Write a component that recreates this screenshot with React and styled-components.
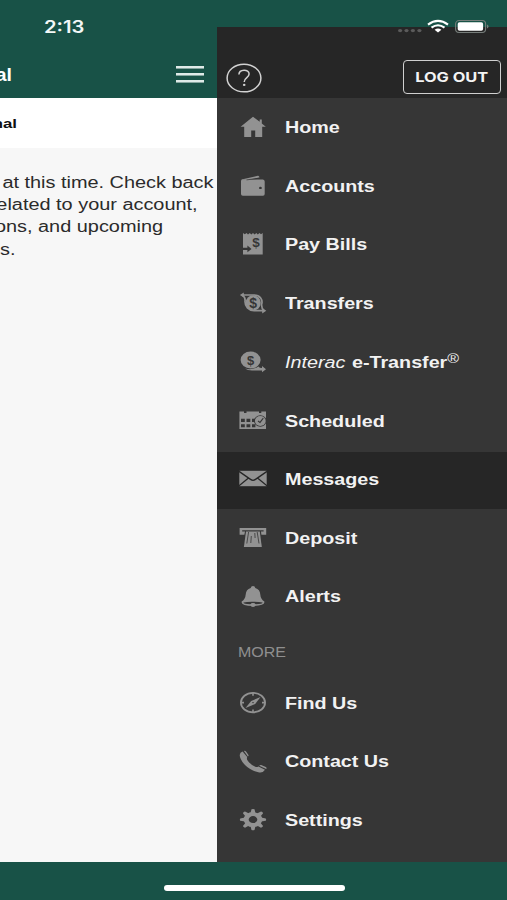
import styled, { createGlobalStyle } from "styled-components";

const green = "#185247";
const dark = "#262626";
const panel = "#363636";
const iconGray = "#929292";

const menu = [
  { label: "Home", icon: HomeIcon },
  { label: "Accounts", icon: WalletIcon },
  { label: "Pay Bills", icon: BillIcon },
  { label: "Transfers", icon: TransferIcon },
  { label: "e-Transfer", icon: InteracIcon, interac: true },
  { label: "Scheduled", icon: CalendarIcon },
  { label: "Messages", icon: MailIcon, active: true },
  { label: "Deposit", icon: DepositIcon },
  { label: "Alerts", icon: BellIcon },
];

const more = [
  { label: "Find Us", icon: CompassIcon },
  { label: "Contact Us", icon: PhoneIcon },
  { label: "Settings", icon: GearIcon },
];

function App() {
  return (
    <>
      <GlobalStyle />
      <Screen>
        <Content>
          <Page>
            <PageHeader>
              <Title>al</Title>
              <MenuButton aria-label="Menu">
                <span />
                <span />
                <span />
              </MenuButton>
            </PageHeader>
            <SubHeader>
              <Tail $width={17}>nal</Tail>
            </SubHeader>
            <Message>
              <Tail $width={213.5}>at this time. Check back</Tail>
              <Tail $width={197.6}>elated to your account,</Tail>
              <Tail $width={163}>ons, and upcoming</Tail>
              <Tail $width={15.6}>s.</Tail>
            </Message>
          </Page>
          <Drawer>
            <DrawerHeader>
              <HelpIcon />
              <LogOut>
                <Wide $scale={1.23} $center>LOG OUT</Wide>
              </LogOut>
            </DrawerHeader>
            <nav>
              {menu.map((item) => (
                <MenuItem key={item.label} item={item} />
              ))}
              <Section>
                <Wide $scale={1.16}>MORE</Wide>
              </Section>
              {more.map((item) => (
                <MenuItem key={item.label} item={item} />
              ))}
            </nav>
          </Drawer>
        </Content>
        <BottomBar>
          <HomeIndicator />
        </BottomBar>
        <StatusBar>
          <Time>
            <Wide $scale={1.19}>2:13</Wide>
          </Time>
          <StatusIcons />
        </StatusBar>
      </Screen>
    </>
  );
}

export default App;

function MenuItem({ item }) {
  const Icon = item.icon;
  return (
    <Row $active={item.active} $tall={item.interac}>
      <IconBox viewBox="0 0 28 24">
        <Icon />
      </IconBox>
      <Label $scale={1.232}>
        {item.interac && <em>Interac </em>}
        {item.label}
        {item.interac && <sup>®</sup>}
      </Label>
    </Row>
  );
}

function HomeIcon() {
  return <path d="M14 1.7 L20.7 6.8 V4.4 H22.8 V8.5 L26.8 11.8 H23.2 V22 H16.2 V15.5 H12.2 V22 H5.2 V11.8 H1.6 Z" />;
}

function WalletIcon() {
  return (
    <>
      <path d="M2.6 5.4 L18.8 1.8 Q20.2 1.5 20.5 3.4 L8 6 Z" />
      <path d="M3.5 5.2 L8 5.6 H24 Q25.7 6 25.7 7.6 V20 Q25.7 21.8 24 21.8 H3.8 Q2 21.8 2 20 V7 Q2 5.3 3.5 5.2 Z" />
      <path d="M7.5 5.9 L20.5 4.2" stroke={panel} strokeWidth=".7" />
      <ellipse cx="21.4" cy="13.9" rx="1.4" ry="1.2" fill={panel} />
    </>
  );
}

function BillIcon() {
  return (
    <>
      <path d="M4 1 L5.8 2.2 L7.6 1 L9 2.6 L10.8 1 L12.3 2.6 L14 1 L15.6 2.6 L17.3 1 L18.8 2.6 L20.5 1 L22 2.2 L23.7 1 V22.5 H4 Z" />
      <Dollar x="17" y="15.4" $size={13.5}>$</Dollar>
      <path d="M3.5 15.8 H8.4 V13.5 L12.5 16.9 L8.4 20.3 V18 H3.5 Z" fill={panel} />
    </>
  );
}

function TransferIcon() {
  return (
    <>
      <ellipse cx="14.2" cy="11.8" rx="7.6" ry="7.6" />
      <path d="M3.5 4 H14 C21.5 3.6 24 9 22.6 13.5 Q22.4 17.5 25 19.6" fill="none" stroke={iconGray} strokeWidth="1.7" />
      <path d="M3.6 4.6 Q6.6 6.3 6 10.5 C6 15.5 9.5 19.6 15 19.7 H24.5" fill="none" stroke={iconGray} strokeWidth="1.7" />
      <path d="M.9 4 L4.8 1.4 V6.6 Z M27.3 19.7 L23.2 17 V22.5 Z" />
      <Dollar x="14.2" y="16.7" $size={14}>$</Dollar>
    </>
  );
}

function InteracIcon() {
  return (
    <>
      <ellipse cx="11.6" cy="10.1" rx="10" ry="8.5" />
      <path d="M6 18.6 Q14 20.4 19.4 16.4 Q20.5 18 23 18 V16 L27 19.2 L23 22.2 V20.6 H13 Q8.5 20.6 6 18.6 Z" />
      <Dollar x="11.7" y="14.6" $size={13}>$</Dollar>
    </>
  );
}

function CalendarIcon() {
  return (
    <>
      <path d="M.4 2.4 H5 V4 H7.5 V2.4 H20 V4 H22.3 V2.4 H27 V20.1 H.4 Z" />
      <path
        d="M2 9.8 H5.8 V12.9 H2 Z M7.5 9.8 H11.3 V12.9 H7.5 Z M13 9.8 H16.4 V12.9 H13 Z M2 15.2 H5.8 V18.3 H2 Z M7.5 15.2 H11.3 V18.3 H7.5 Z M13 15.2 H16.4 V18.3 H13 Z"
        fill={panel}
      />
      <ellipse cx="21.3" cy="12" rx="6.3" ry="5.8" fill={panel} />
      <ellipse cx="21.3" cy="12" rx="5.4" ry="4.9" />
      <path d="M19 12 L21 13.4 L24.3 9.2" fill="none" stroke={panel} strokeWidth="1.1" />
    </>
  );
}

function MailIcon() {
  return (
    <>
      <path d="M.3 3.8 H27.7 V19.2 H.3 Z" />
      <path d="M0 4.4 L11.5 12.4 Q14 14.2 16.5 12.4 L28 4.4 M0 18.8 L9.5 11 M28 18.8 L18.5 11" fill="none" stroke={dark} strokeWidth="1.3" />
    </>
  );
}

function DepositIcon() {
  return (
    <>
      <path d="M.6 1.9 H27.2 V8.8 H22.4 L22 5.6 H24.6 V4.2 H3.2 V5.6 H6 L5.4 8.8 H.6 Z" />
      <path d="M7 5.4 H20.8 L22.8 20.9 H4.9 Z" />
      <path d="M9.6 6 L7.8 17.5 M18.2 6 L20 17.5 M12.3 10 L11.8 17 M15.8 7 L16.1 12" fill="none" stroke={panel} strokeWidth=".8" />
    </>
  );
}

function BellIcon() {
  return (
    <>
      <path d="M14 1 Q16 1 16.3 3 Q21 4.3 21.3 9.5 Q21.6 14 25.3 16.6 Q26.5 20.8 14 21 Q1.5 20.8 2.7 16.6 Q6.4 14 6.7 9.5 Q7 4.3 11.7 3 Q12 1 14 1 Z" />
      <path d="M4.4 17.6 Q8 16.7 14 16.8 Q20 16.7 23.6 17.6 Q23.6 19 16.8 19.3 Q14 17.2 11.2 19.3 Q4.4 19 4.4 17.6 Z" fill={panel} />
      <ellipse cx="14" cy="20" rx="2.4" ry="1.9" />
    </>
  );
}

function CompassIcon() {
  return (
    <>
      <ellipse cx="14" cy="11.6" rx="12.1" ry="9.7" fill="none" stroke={iconGray} strokeWidth="1.8" />
      <path d="M14 2 V4.8 M14 18.4 V21 M2 11.6 H5 M23 11.6 H26" stroke={iconGray} strokeWidth="1.6" />
      <path d="M21.5 5.9 L16.2 13.1 L6.5 17.1 L12.2 10 Z" />
      <ellipse cx="14" cy="11.6" rx=".8" ry=".7" fill={panel} />
    </>
  );
}

function PhoneIcon() {
  return (
    <>
      <path d="M3.6 1.6 L8.2 7.1 Q7.4 8.8 8.8 10.8 Q11.6 14.7 16.3 16.8 Q18 17.4 19.4 16.5 L26 19.8 Q24 23 20.3 22.4 Q12 21.1 6 15 Q.8 9.4 .7 5 Q.9 2.4 3.6 1.6 Z" />
      <path d="M4.9 1 Q6.1 .3 7 1.4 L9.5 5 Q9.8 6 8.9 6.4 Z M20.2 15.8 Q21 14.8 22.2 15.1 L26.8 17 Q28.1 17.8 27.2 19.1 Z" />
    </>
  );
}

function GearIcon() {
  return (
    <g transform="translate(14 11.6) scale(1.24 1)">
      {[0, 45, 90, 135, 180, 225, 270, 315].map((angle) => (
        <path key={angle} d="M-2 -6.5 L-1.2 -10.3 Q0 -11 1.2 -10.3 L2 -6.5 Z" transform={`rotate(${angle})`} />
      ))}
      <circle r="5.5" fill="none" stroke={iconGray} strokeWidth="4" />
    </g>
  );
}

function HelpIcon() {
  return (
    <HelpSvg viewBox="0 0 36 30">
      <ellipse cx="18" cy="15" rx="16.9" ry="13.8" fill="none" stroke="#d2d2d2" strokeWidth="1.5" />
      <path d="M12.9 11.6 C13 5.7 23.2 5.8 23.1 11 C23 14.8 18.2 14.4 18.2 19" fill="none" stroke="#d2d2d2" strokeWidth="1.5" />
      <ellipse cx="18.2" cy="21.9" rx="1.3" ry="1.1" fill="#d2d2d2" />
    </HelpSvg>
  );
}

function StatusIcons() {
  return (
    <StatusSvg viewBox="0 0 92 16">
      <g fill="#5b5b5b">
        <ellipse cx="3.1" cy="12.6" rx="2.1" ry="1.7" />
        <ellipse cx="9.5" cy="12.6" rx="2.1" ry="1.7" />
        <ellipse cx="15.9" cy="12.6" rx="2.1" ry="1.7" />
        <ellipse cx="22.4" cy="12.6" rx="2.1" ry="1.7" />
      </g>
      <g fill="none" stroke="#fff" strokeWidth="2.2">
        <path d="M31 6.6 Q41 -.8 51 6.6" />
        <path d="M34.5 9.6 Q41 4.9 47.5 9.6" />
      </g>
      <path d="M37.6 11.7 Q41 9.4 44.4 11.7 L41 14.6 Z" fill="#fff" />
      <rect x="58.6" y="2.5" width="30" height="12" rx="3.5" fill="none" stroke="#777e7b" strokeWidth="1.1" />
      <rect x="60.7" y="4.2" width="25.4" height="8.6" rx="1.8" fill="#fff" />
      <path d="M90 6.4 Q91.5 7 91.5 8.5 Q91.5 10 90 10.6 Z" fill="#777e7b" />
    </StatusSvg>
  );
}

const GlobalStyle = createGlobalStyle`
  body {
    margin: 0;
    font-family: "Liberation Sans", Arial, sans-serif;
  }

  * {
    box-sizing: border-box;
  }
`;

const Screen = styled.div`
  position: relative;
  width: 507px;
  height: 900px;
  display: flex;
  flex-direction: column;
  overflow: hidden;
  background: ${green};
`;

const Content = styled.div`
  height: 862px;
  display: grid;
  grid-template-columns: 217px 290px;
`;

const Page = styled.main`
  display: flex;
  flex-direction: column;
  overflow: hidden;
  background: #f7f7f7;
  color: #2b2b2b;
`;

const PageHeader = styled.header`
  height: 98px;
  display: flex;
  justify-content: space-between;
  padding: 62px 13px 0 0;
  background: ${green};
`;

const Title = styled.h1`
  width: 12px;
  margin: 0;
  display: flex;
  justify-content: flex-end;
  color: #fff;
  font-size: 18.5px;
  line-height: 25px;
  transform: scaleX(1.05);
  transform-origin: right;
`;

const MenuButton = styled.button`
  width: 28px;
  height: 24px;
  padding: 4px 0 0;
  border: 0;
  background: none;
  display: flex;
  flex-direction: column;
  gap: 4px;

  span {
    height: 3px;
    width: 28px;
    flex: none;
    background: linear-gradient(#dfeae8 2px, #86a59f 2px);
  }
`;

const SubHeader = styled.div`
  height: 50px;
  padding-top: 15px;
  background: #fff;
  color: #111;
  font-size: 13.5px;
  font-weight: bold;
`;

const Message = styled.div`
  padding-top: 24px;
  font-size: 16px;
`;

const Tail = styled.div`
  width: ${({ $width }) => $width}px;
  display: flex;
  justify-content: flex-end;
  white-space: nowrap;
  line-height: 22.2px;
  transform: scaleX(1.243);
  transform-origin: right;
`;

const Drawer = styled.aside`
  margin-top: 27px;
  background: ${panel};
  color: #f2f2f2;
`;

const DrawerHeader = styled.div`
  height: 71px;
  display: flex;
  align-items: flex-start;
  justify-content: space-between;
  padding: 33px 6px 0 9px;
  background: ${dark};
`;

const HelpSvg = styled.svg`
  width: 36px;
  height: 30px;
  margin-top: 3px;
`;

const LogOut = styled.button`
  width: 98.5px;
  height: 33.5px;
  padding: 0;
  border: 1.5px solid #d0d0d0;
  border-radius: 4px;
  background: none;
  color: #f4f4f4;
  font-family: Inter, sans-serif;
  font-size: 13.3px;
  font-weight: 700;
`;

const Wide = styled.span`
  display: inline-block;
  white-space: pre;
  transform: scaleX(${({ $scale }) => $scale});
  transform-origin: ${({ $center }) => ($center ? "center" : "left")};
`;

const Label = styled(Wide)`
  padding-top: 1.6px;

  em {
    margin-right: 1px;
    font-weight: normal;
  }

  sup {
    font-size: 13px;
    font-weight: normal;
    line-height: 0;
    vertical-align: 5.5px;
  }
`;

const Row = styled.div`
  height: ${({ $tall }) => ($tall ? 59.2 : 58.6)}px;
  display: flex;
  align-items: center;
  gap: 18px;
  padding: 0 0 2px 22px;
  border-top: 2px solid ${panel};
  background: ${({ $active }) => ($active ? dark : panel)};
  font-size: 16px;
  font-weight: bold;
`;

const IconBox = styled.svg`
  width: 28px;
  height: 24px;
  flex: none;
  fill: ${iconGray};
`;

const Dollar = styled.text`
  fill: ${panel};
  font-size: ${({ $size }) => $size}px;
  font-weight: bold;
  text-anchor: middle;
`;

const Section = styled.div`
  height: 47.7px;
  padding: 19px 0 0 20.5px;
  color: #8f8f8f;
  font-size: 13.8px;
`;

const BottomBar = styled.footer`
  height: 38px;
  display: flex;
  padding: 23px 0 0 164px;
`;

const HomeIndicator = styled.div`
  width: 181px;
  height: 6px;
  border-radius: 3px;
  background: #fff;
`;

/* the status bar floats over the page and the drawer */
const StatusBar = styled.div`
  position: absolute;
  top: 0;
  left: 0;
  width: 507px;
  height: 44px;
  display: flex;
  justify-content: space-between;
  padding: 16.6px 18px 0 43.6px;
`;

const Time = styled.div`
  color: #f3f8f7;
  font-family: Inter, sans-serif;
  font-size: 17px;
  font-weight: 600;
  line-height: 21px;
`;

const StatusSvg = styled.svg`
  width: 92px;
  height: 16px;
  margin-top: 1px;
`;
